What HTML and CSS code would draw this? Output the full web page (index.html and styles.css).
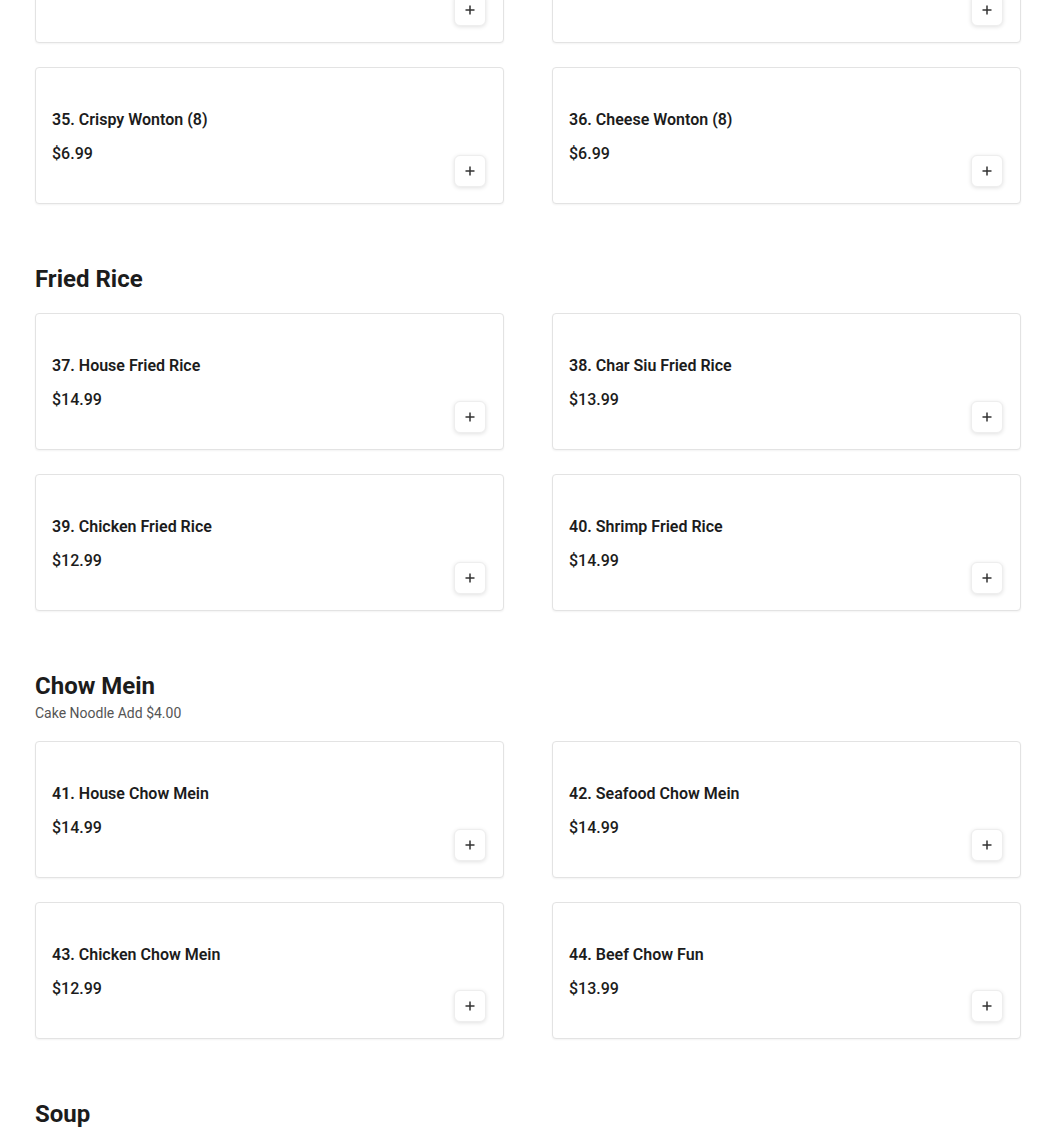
FILE: index.html
```html
<!DOCTYPE html>
<html lang="en">
<head>
<meta charset="utf-8">
<title>Menu</title>
<link rel="stylesheet" href="styles.css">
</head>
<body>
<main class="menu">
  <section class="section section-cut">
    <div class="grid">
      <div class="card"><div class="info"><div class="name">33. Fried Wonton (8)</div><div class="price">$6.99</div></div><button class="add" aria-label="Add"><svg viewBox="0 0 12 12" width="12" height="12"><path d="M6 1.5v9M1.5 6h9" stroke="#333" stroke-width="1.5" fill="none"/></svg></button></div>
      <div class="card"><div class="info"><div class="name">34. Egg Rolls (2)</div><div class="price">$5.99</div></div><button class="add" aria-label="Add"><svg viewBox="0 0 12 12" width="12" height="12"><path d="M6 1.5v9M1.5 6h9" stroke="#333" stroke-width="1.5" fill="none"/></svg></button></div>
      <div class="card"><div class="info"><div class="name">35. Crispy Wonton (8)</div><div class="price">$6.99</div></div><button class="add" aria-label="Add"><svg viewBox="0 0 12 12" width="12" height="12"><path d="M6 1.5v9M1.5 6h9" stroke="#333" stroke-width="1.5" fill="none"/></svg></button></div>
      <div class="card"><div class="info"><div class="name">36. Cheese Wonton (8)</div><div class="price">$6.99</div></div><button class="add" aria-label="Add"><svg viewBox="0 0 12 12" width="12" height="12"><path d="M6 1.5v9M1.5 6h9" stroke="#333" stroke-width="1.5" fill="none"/></svg></button></div>
    </div>
  </section>

  <section class="section">
    <header class="section-head"><h2 class="section-title">Fried Rice</h2></header>
    <div class="grid">
      <div class="card"><div class="info"><div class="name">37. House Fried Rice</div><div class="price">$14.99</div></div><button class="add" aria-label="Add"><svg viewBox="0 0 12 12" width="12" height="12"><path d="M6 1.5v9M1.5 6h9" stroke="#333" stroke-width="1.5" fill="none"/></svg></button></div>
      <div class="card"><div class="info"><div class="name">38. Char Siu Fried Rice</div><div class="price">$13.99</div></div><button class="add" aria-label="Add"><svg viewBox="0 0 12 12" width="12" height="12"><path d="M6 1.5v9M1.5 6h9" stroke="#333" stroke-width="1.5" fill="none"/></svg></button></div>
      <div class="card"><div class="info"><div class="name">39. Chicken Fried Rice</div><div class="price">$12.99</div></div><button class="add" aria-label="Add"><svg viewBox="0 0 12 12" width="12" height="12"><path d="M6 1.5v9M1.5 6h9" stroke="#333" stroke-width="1.5" fill="none"/></svg></button></div>
      <div class="card"><div class="info"><div class="name">40. Shrimp Fried Rice</div><div class="price">$14.99</div></div><button class="add" aria-label="Add"><svg viewBox="0 0 12 12" width="12" height="12"><path d="M6 1.5v9M1.5 6h9" stroke="#333" stroke-width="1.5" fill="none"/></svg></button></div>
    </div>
  </section>

  <section class="section">
    <header class="section-head"><h2 class="section-title">Chow Mein</h2><p class="section-sub">Cake Noodle Add $4.00</p></header>
    <div class="grid">
      <div class="card"><div class="info"><div class="name">41. House Chow Mein</div><div class="price">$14.99</div></div><button class="add" aria-label="Add"><svg viewBox="0 0 12 12" width="12" height="12"><path d="M6 1.5v9M1.5 6h9" stroke="#333" stroke-width="1.5" fill="none"/></svg></button></div>
      <div class="card"><div class="info"><div class="name">42. Seafood Chow Mein</div><div class="price">$14.99</div></div><button class="add" aria-label="Add"><svg viewBox="0 0 12 12" width="12" height="12"><path d="M6 1.5v9M1.5 6h9" stroke="#333" stroke-width="1.5" fill="none"/></svg></button></div>
      <div class="card"><div class="info"><div class="name">43. Chicken Chow Mein</div><div class="price">$12.99</div></div><button class="add" aria-label="Add"><svg viewBox="0 0 12 12" width="12" height="12"><path d="M6 1.5v9M1.5 6h9" stroke="#333" stroke-width="1.5" fill="none"/></svg></button></div>
      <div class="card"><div class="info"><div class="name">44. Beef Chow Fun</div><div class="price">$13.99</div></div><button class="add" aria-label="Add"><svg viewBox="0 0 12 12" width="12" height="12"><path d="M6 1.5v9M1.5 6h9" stroke="#333" stroke-width="1.5" fill="none"/></svg></button></div>
    </div>
  </section>

  <section class="section">
    <header class="section-head"><h2 class="section-title">Soup</h2></header>
    <div class="grid">
      <div class="card"><div class="info"><div class="name">45. Wonton Soup</div><div class="price">$9.99</div></div><button class="add" aria-label="Add"><svg viewBox="0 0 12 12" width="12" height="12"><path d="M6 1.5v9M1.5 6h9" stroke="#333" stroke-width="1.5" fill="none"/></svg></button></div>
      <div class="card"><div class="info"><div class="name">46. Hot and Sour Soup</div><div class="price">$9.99</div></div><button class="add" aria-label="Add"><svg viewBox="0 0 12 12" width="12" height="12"><path d="M6 1.5v9M1.5 6h9" stroke="#333" stroke-width="1.5" fill="none"/></svg></button></div>
    </div>
  </section>
</main>
</body>
</html>
```

FILE: styles.css
```css
* { box-sizing: border-box; }
html, body { margin: 0; padding: 0; background: #fff; }
body {
  font-family: Roboto, "Liberation Sans", Arial, sans-serif;
  color: #1c1c1c;
  overflow: hidden;
}
.menu {
  width: 986px;
  margin-left: 35px;
}
.section { margin-top: 59px; }
.section-cut { margin-top: -94px; }
.section-head { margin-bottom: 18px; }
.section-title {
  margin: 0;
  font-size: 24px;
  line-height: 32px;
  font-weight: 700;
  color: #1c1c1c;
}
.section-sub {
  margin: 2px 0 0;
  font-size: 14px;
  line-height: 19px;
  color: #555;
}
.grid {
  display: grid;
  grid-template-columns: 1fr 1fr;
  column-gap: 48px;
  row-gap: 24px;
}
.card {
  height: 137px;
  border: 1px solid #e3e3e3;
  border-radius: 4px;
  box-shadow: 0 1px 2px rgba(0,0,0,0.05);
  padding: 16px;
  display: grid;
  grid-template-columns: 1fr auto;
  background: #fff;
}
.info { padding-top: 24px; }
.name {
  font-size: 16px;
  line-height: 24px;
  font-weight: 600;
  color: #1c1c1c;
}
.price {
  margin-top: 10px;
  font-size: 16px;
  line-height: 24px;
  font-weight: 500;
  color: #1c1c1c;
}
.add {
  align-self: end;
  width: 32px;
  height: 32px;
  margin-right: 1px;
  padding: 0;
  border: 1px solid #eeeeee;
  border-radius: 6px;
  background: #fff;
  box-shadow: 0 1px 4px rgba(0,0,0,0.12);
  display: flex;
  align-items: center;
  justify-content: center;
  cursor: pointer;
}
.add svg { display: block; }
```
